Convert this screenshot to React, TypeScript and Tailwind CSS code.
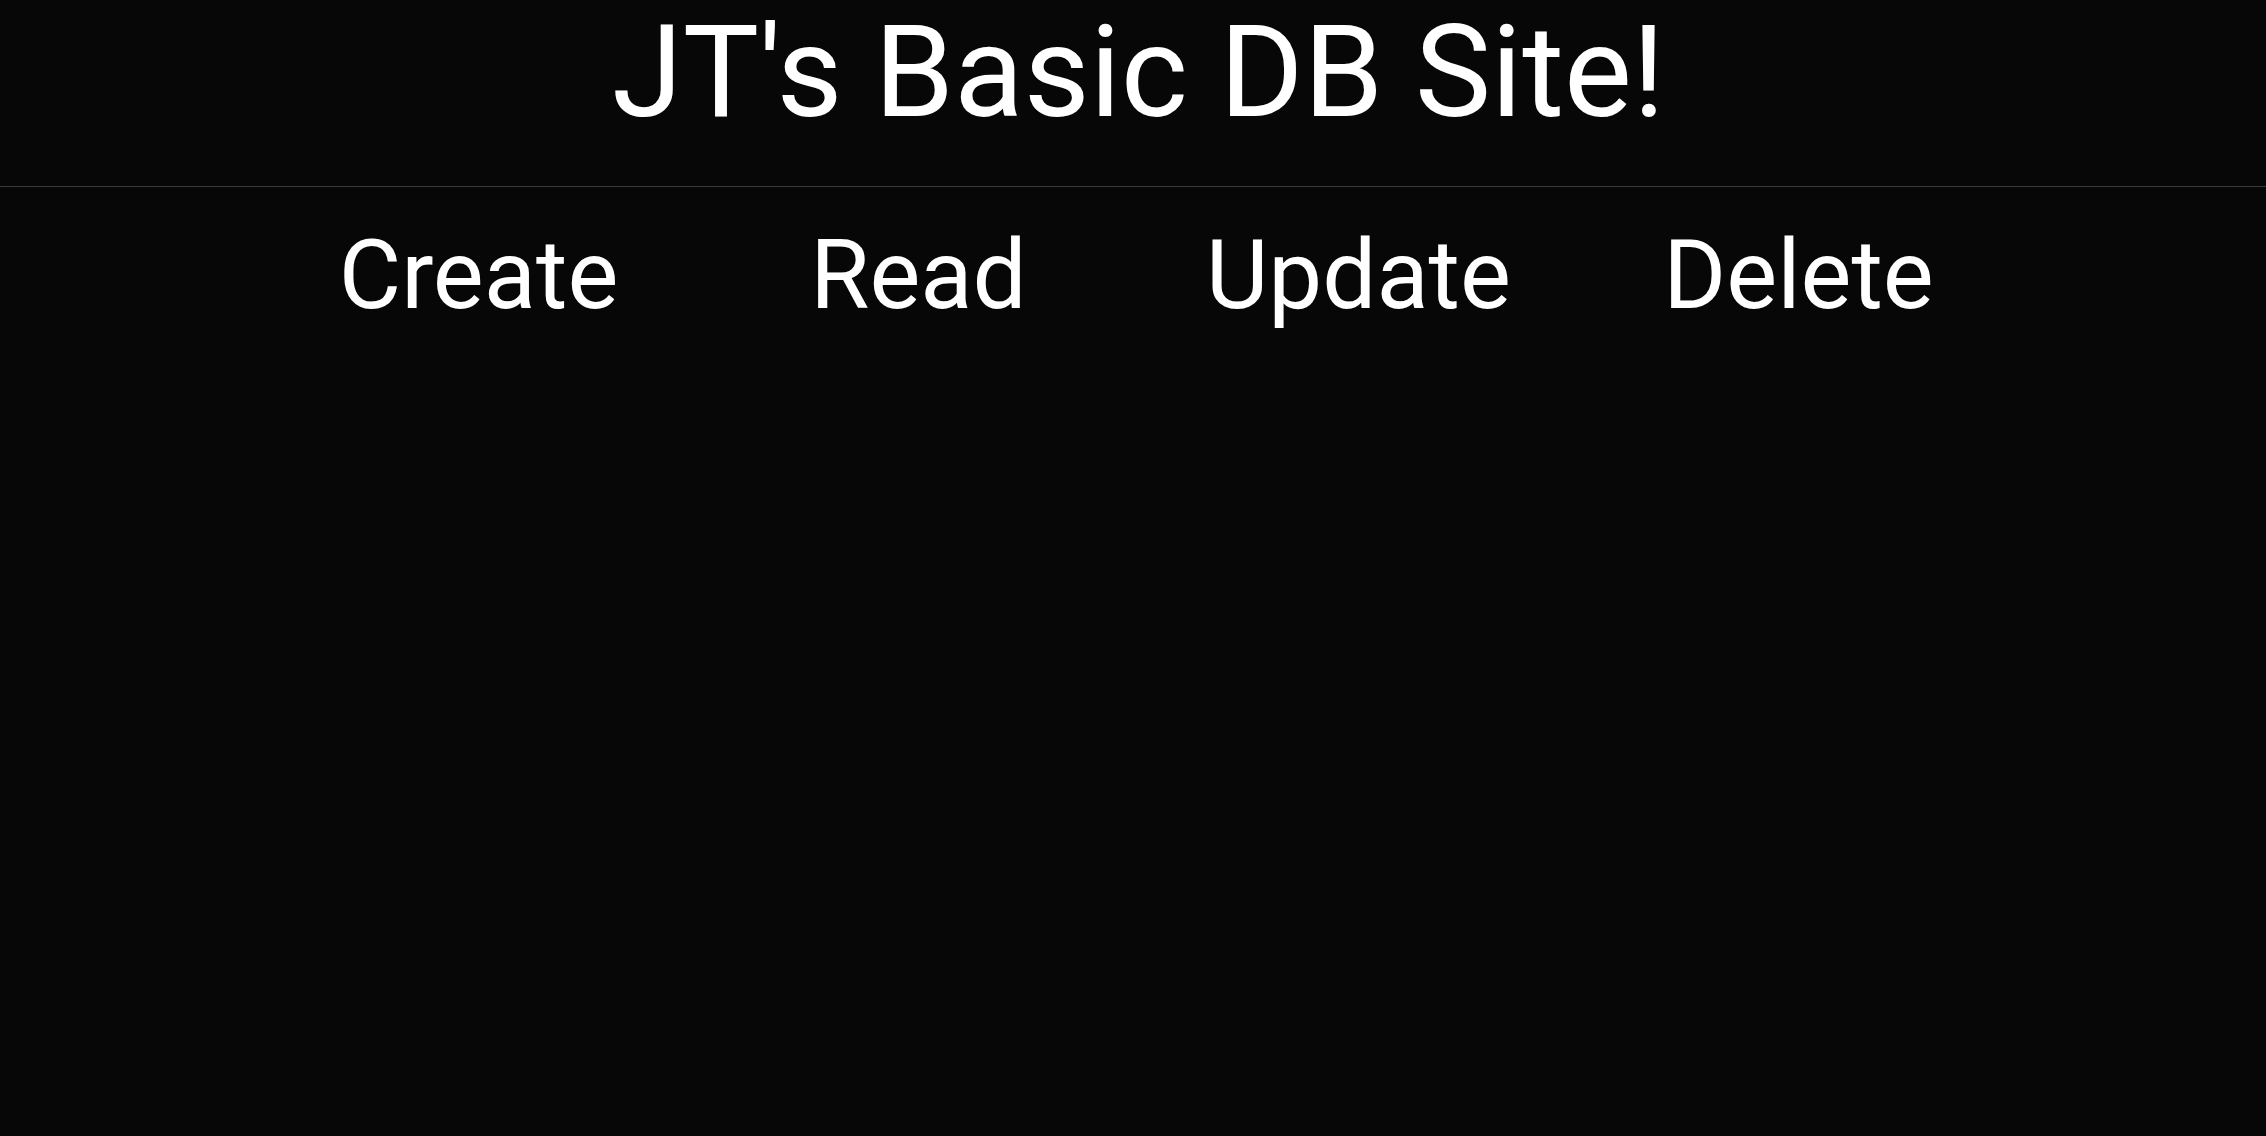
import React from "react";

const LINKS = ["Create", "Read", "Update", "Delete"];

const App = () => {
    return (
        <div className="min-h-screen w-full bg-[#070707] text-white font-['Roboto',sans-serif]">
            {/* heading */}
            <header className="pt-[8px] pb-[50px] pl-[11px] border-b border-[#3a3a3a]">
                <h1 className="text-center text-[128px] leading-none font-normal">
                    JT's Basic DB Site!
                </h1>
            </header>

            {/* nav */}
            <nav className="pt-[40px] pl-[11px]">
                <ul className="grid grid-cols-4 w-[1760px] mx-auto">
                    {LINKS.map((link) => {
                        return (
                            <li key={link} className="text-center text-[96px] leading-none">
                                <a href="#">{link}</a>
                            </li>
                        );
                    })}
                </ul>
            </nav>
        </div>
    );
};

export default App;
